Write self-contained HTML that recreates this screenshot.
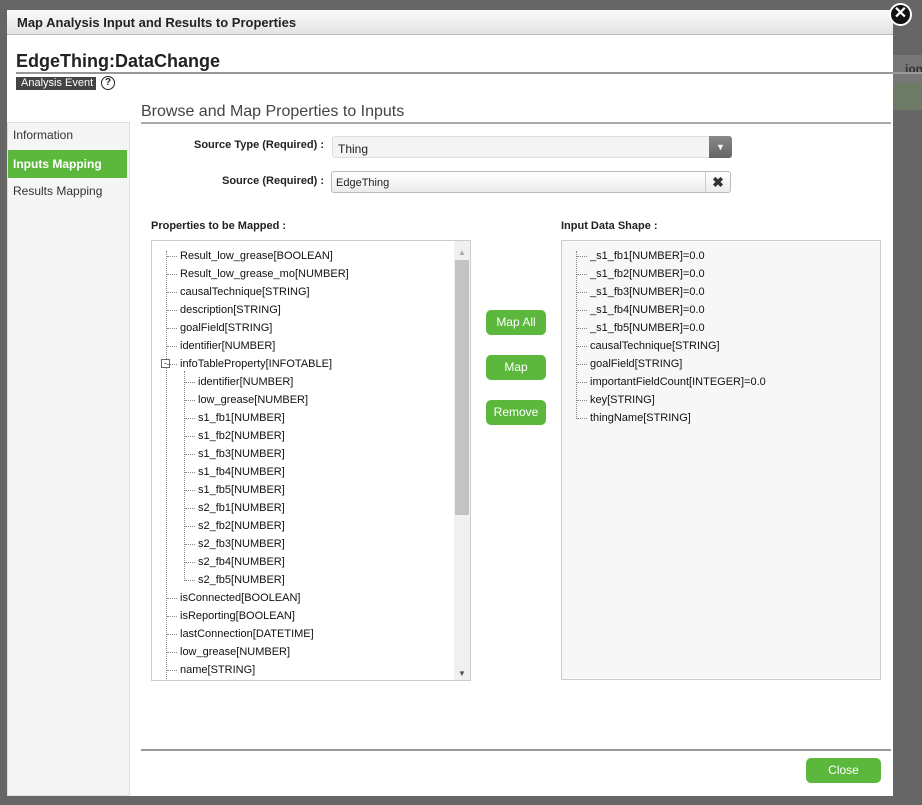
<!DOCTYPE html>
<html><head><style>
*{margin:0;padding:0;box-sizing:border-box}
body{width:922px;height:805px;background:#666;position:relative;overflow:hidden;font-family:"Liberation Sans",Arial,sans-serif;color:#222}
.abs{position:absolute}
#dlg{left:7px;top:10px;width:886px;height:786px;background:#fff}
#tb{left:7px;top:10px;width:886px;height:25px;background:linear-gradient(#fafafa,#e4e4e4);border-bottom:1px solid #bbb;font-size:13px;font-weight:bold;padding:5px 10px;color:#222}
.tree{font-size:11px;line-height:18px;color:#111}
.row{position:absolute;white-space:nowrap}
.btn{position:absolute;background:#5cb83c;color:#fff;border-radius:5px;font-size:12px;text-align:center;line-height:25px;width:60px;height:25px}
.dot{position:absolute;border-left:1px dotted #888}
.hd{position:absolute;border-top:1px dotted #888;width:9px}
</style></head><body>
<div class="abs" style="left:893px;top:55px;width:29px;height:28px;background:#777"></div>
<div class="abs" style="left:893px;top:83px;width:29px;height:27px;background:#6d7a66"></div>
<div class="abs" style="left:905px;top:62px;font-size:12px;font-weight:bold;color:#333">ion</div>
<div id="dlg" class="abs"></div>
<div id="tb" class="abs">Map Analysis Input and Results to Properties</div>
<div class="abs" style="left:889px;top:3px;width:23px;height:23px;border-radius:50%;background:#111;border:2px solid #fff;color:#fff;font-size:16px;font-weight:bold;text-align:center;line-height:18px">✕</div>
<div class="abs" style="left:16px;top:51px;font-size:18px;font-weight:bold;color:#222">EdgeThing:DataChange</div>
<div class="abs" style="left:16px;top:72px;width:906px;height:2px;background:#999"></div>
<div class="abs" style="left:16px;top:77px;width:80px;height:13px;background:#444;color:#fff;font-size:11px;line-height:13px;padding-left:5px">Analysis Event</div>
<div class="abs" style="left:101px;top:76px;width:14px;height:14px;border:1.5px solid #222;border-radius:50%;font-size:10px;font-weight:bold;text-align:center;line-height:11px">?</div>
<div class="abs" style="left:141px;top:103px;font-size:16px;color:#444">Browse and Map Properties to Inputs</div>
<div class="abs" style="left:141px;top:122px;width:750px;height:2px;background:#aaa"></div>
<div class="abs" style="left:7px;top:122px;width:123px;height:674px;background:#f5f5f5;border:1px solid #ddd"></div>
<div class="abs" style="left:13px;top:128px;font-size:12px;color:#333">Information</div>
<div class="abs" style="left:8px;top:150px;width:119px;height:28px;background:#5cb83c;color:#fff;font-weight:bold;font-size:12px;padding:7px 5px">Inputs Mapping</div>
<div class="abs" style="left:13px;top:184px;font-size:12px;color:#333">Results Mapping</div>
<div class="abs" style="left:194px;top:139px;font-size:11px;font-weight:bold">Source Type (Required) :</div>
<div class="abs" style="left:222px;top:175px;font-size:11px;font-weight:bold">Source (Required) :</div>
<div class="abs" style="left:332px;top:136px;width:400px;height:22px;background:#f4f4f4;border:1px solid #ddd;border-radius:3px;font-size:12px;padding:5px 5px"><span>Thing</span></div>
<div class="abs" style="left:709px;top:136px;width:23px;height:22px;background:linear-gradient(#888,#666);border-radius:0 3px 3px 0;color:#fff;font-size:9px;text-align:center;line-height:22px">▼</div>
<div class="abs" style="left:331px;top:171px;width:400px;height:22px;background:linear-gradient(#fff,#ececec);border:1px solid #bbb;border-radius:3px;font-size:11px;padding:5px 4px">EdgeThing</div>
<div class="abs" style="left:705px;top:172px;width:25px;height:20px;border-left:1px solid #ccc;font-size:14px;font-weight:bold;text-align:center;line-height:20px;color:#333">✖</div>
<div class="abs" style="left:151px;top:220px;font-size:11px;font-weight:bold">Properties to be Mapped :</div>
<div class="abs" style="left:561px;top:220px;font-size:11px;font-weight:bold">Input Data Shape :</div>
<div class="abs tree" style="left:151px;top:240px;width:320px;height:441px;border:1px solid #ccc;background:#fff;overflow:hidden">
<div class="abs" style="left:302px;top:0;width:17px;height:440px;background:#f0f0f0"></div>
<div class="abs" style="left:303px;top:19px;width:14px;height:255px;background:#c3c3c3"></div>
<div class="abs" style="left:306px;top:3px;font-size:8px;color:#aaa">▲</div>
<div class="abs" style="left:306px;top:424px;font-size:8px;color:#555">▼</div>
<div class="dot" style="left:14px;top:10px;height:430px"></div>
<div class="dot" style="left:32px;top:130px;height:210px"></div>
<div class="abs" style="left:9px;top:118px;width:9px;height:9px;border:1px solid #666;background:#fff;font-size:9px;line-height:6px;text-align:center">-</div>
<div id="lt"></div>
</div>
<div class="abs tree" style="left:561px;top:240px;width:320px;height:440px;border:1px solid #ccc;background:#f7f7f7">
<div class="dot" style="left:14px;top:10px;height:168px"></div>
<div id="rt"></div>
</div>
<div class="btn" style="left:486px;top:310px">Map All</div>
<div class="btn" style="left:486px;top:355px">Map</div>
<div class="btn" style="left:486px;top:400px">Remove</div>
<div class="abs" style="left:141px;top:749px;width:750px;height:2px;background:#999"></div>
<div class="btn" style="left:806px;top:758px;width:75px">Close</div>
<script>
var L=["Result_low_grease[BOOLEAN]","Result_low_grease_mo[NUMBER]","causalTechnique[STRING]","description[STRING]","goalField[STRING]","identifier[NUMBER]","infoTableProperty[INFOTABLE]","*identifier[NUMBER]","*low_grease[NUMBER]","*s1_fb1[NUMBER]","*s1_fb2[NUMBER]","*s1_fb3[NUMBER]","*s1_fb4[NUMBER]","*s1_fb5[NUMBER]","*s2_fb1[NUMBER]","*s2_fb2[NUMBER]","*s2_fb3[NUMBER]","*s2_fb4[NUMBER]","*s2_fb5[NUMBER]","isConnected[BOOLEAN]","isReporting[BOOLEAN]","lastConnection[DATETIME]","low_grease[NUMBER]","name[STRING]"];
var h="";L.forEach(function(t,i){var c=t[0]=="*";if(c)t=t.slice(1);var y=6+i*18;var x=c?46:28;h+='<div class="hd" style="left:'+(c?33:15)+'px;top:'+(y+9)+'px;width:'+(c?10:10)+'px"></div><div class="row" style="left:'+x+'px;top:'+y+'px">'+t+'</div>';});
document.getElementById("lt").innerHTML=h;
var R=["_s1_fb1[NUMBER]=0.0","_s1_fb2[NUMBER]=0.0","_s1_fb3[NUMBER]=0.0","_s1_fb4[NUMBER]=0.0","_s1_fb5[NUMBER]=0.0","causalTechnique[STRING]","goalField[STRING]","importantFieldCount[INTEGER]=0.0","key[STRING]","thingName[STRING]"];
h="";R.forEach(function(t,i){var y=6+i*18;h+='<div class="hd" style="left:15px;top:'+(y+9)+'px;width:10px"></div><div class="row" style="left:28px;top:'+y+'px">'+t+'</div>';});
document.getElementById("rt").innerHTML=h;
</script>
</body></html>
